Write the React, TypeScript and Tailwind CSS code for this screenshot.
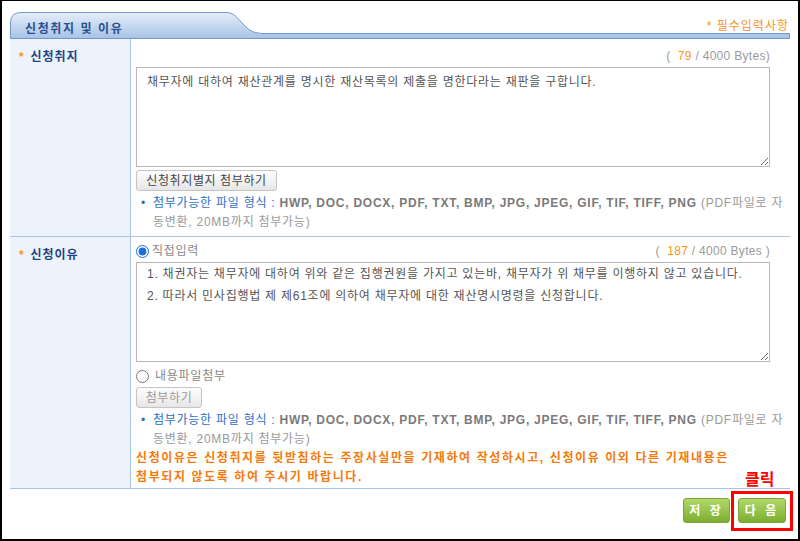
import React from "react";

const F = { fontFamily: '"Liberation Sans", "Noto Sans CJK KR", sans-serif' };

function FileNote() {
  return (
    <div className="flex gap-[7px] pl-[5px] text-[12px] leading-[19px]">
      <span className="text-[#2d6fc4]">•</span>
      <div className="break-all">
        <span className="text-[#2d6fc4]">첨부가능한 파일 형식 : </span>
        <span className="font-bold text-[#7a7a7a]">HWP, DOC, DOCX, PDF, TXT, BMP, JPG, JPEG, GIF, TIF, TIFF, PNG</span>
        <span className="text-[#9a9a9a]"> (PDF파일로 자동변환, 20MB까지 첨부가능)</span>
      </div>
    </div>
  );
}

function GrayButton({ children, w }: { children: React.ReactNode; w: string }) {
  return (
    <button
      className={`${w} h-[21px] rounded-[3px] border border-[#c4c4c4] bg-gradient-to-b from-[#ffffff] to-[#e6e6e6] text-[12px] text-[#444] leading-none tracking-[0.6px]`}
      style={F}
    >
      {children}
    </button>
  );
}

function Label({ children }: { children: React.ReactNode }) {
  return (
    <div className="flex items-center gap-[6px] pl-[9px] pt-[9px] text-[12px] font-bold text-[#1e4386]">
      <span className="text-[#f7941d]">*</span>
      <span className="tracking-[1px]">{children}</span>
    </div>
  );
}

function Bytes({ n, space }: { n: number; space?: boolean }) {
  return (
    <div className="text-[12px] text-[#9a9a9a] tracking-[0.3px]">
      (&nbsp;&nbsp;<span className="text-[#f7941d]">{n}</span> / 4000 Bytes{space ? " " : ""})
    </div>
  );
}

export default function App() {
  const ta =
    "w-[634px] h-[100px] border border-[#b8b8b8] bg-white pl-[10px] pr-[2px] text-[12px] leading-[22px] text-[#555] resize-y outline-none block overflow-hidden";
  return (
    <div
      className="w-[800px] h-[541px] border-t-[1px] border-l-[2px] border-r-[2px] border-b-[2px] border-black bg-white relative overflow-hidden tracking-[0.75px]"
      style={F}
    >
      <div className="pt-[11px] pl-[8px] pr-[8px]">
        {/* header */}
        <div className="grid h-[27px]">
          <svg className="[grid-area:1/1] self-end" width="782" height="27" viewBox="0 0 782 27">
            <defs>
              <linearGradient id="tg" x1="0" y1="0" x2="0" y2="1">
                <stop offset="0" stopColor="#e6eef9" />
                <stop offset="1" stopColor="#a7c2e6" />
              </linearGradient>
            </defs>
            <path
              d="M0.5 26.5 L0.5 11 Q0.5 0.5 11 0.5 L216 0.5 C231 0.5 232 21.5 252 21.5 L779.5 21.5 L779.5 26.5 Z"
              fill="url(#tg)"
              stroke="#7198cb"
              strokeWidth="1"
            />
          </svg>
          <div className="[grid-area:1/1] flex justify-between pl-[15px] pr-[3px]">
            <span className="pt-[8px] text-[12px] font-bold text-[#284f8f] tracking-[1.6px]">신청취지 및 이유</span>
            <span className="pt-[5px] text-[12px] text-[#f7941d] tracking-[1px]">* 필수입력사항</span>
          </div>
        </div>

        {/* table */}
        <div className="w-[780px]">
          {/* row 1 */}
          <div className="flex h-[198px] border-b border-[#a9c4ea]">
            <div className="w-[121px] bg-[#eef3fb] border-r border-[#a9c4ea]">
              <Label>신청취지</Label>
            </div>
            <div className="flex-1 pl-[5px] pt-[8px]">
              <div className="flex justify-end w-[634px] h-[18px] items-center">
                <Bytes n={79} />
              </div>
              <textarea
                readOnly
                className={`${ta} mt-[2px] pt-[3px]`}
                style={F}
                defaultValue="채무자에 대하여 재산관계를 명시한 재산목록의 제출을 명한다라는 재판을 구합니다."
              />
              <div className="mt-[3px] flex">
                <GrayButton w="w-[141px]">신청취지별지 첨부하기</GrayButton>
              </div>
              <div className="mt-[3px] w-[652px]">
                <FileNote />
              </div>
            </div>
          </div>

          {/* row 2 */}
          <div className="flex h-[252px] border-b border-[#a9c4ea]">
            <div className="w-[121px] bg-[#eef3fb] border-r border-[#a9c4ea]">
              <Label>신청이유</Label>
            </div>
            <div className="flex-1 pl-[5px] pt-[6px]">
              <div className="flex justify-between items-center w-[634px] h-[16px]">
                <label className="flex items-center gap-[3px] text-[12px] text-[#888]">
                  <input type="radio" name="r" defaultChecked className="m-0 w-[13px] h-[13px] accent-[#1a6fe0]" />
                  직접입력
                </label>
                <Bytes n={187} space />
              </div>
              <textarea
                readOnly
                wrap="off"
                className={`${ta} mt-[3px] pt-[0px]`}
                style={F}
                defaultValue={
                  "1. 채권자는 채무자에 대하여 위와 같은 집행권원을 가지고 있는바, 채무자가 위 채무를 이행하지 않고 있습니다.\n2. 따라서 민사집행법 제 제61조에 의하여 채무자에 대한 재산명시명령을 신청합니다."
                }
              />
              <label className="mt-[6px] flex items-center gap-[6px] text-[12px] text-[#888] h-[16px]">
                <input type="radio" name="r" className="m-0 w-[13px] h-[13px] accent-[#1a6fe0]" />
                내용파일첨부
              </label>
              <div className="mt-[3px] flex">
                <GrayButton w="w-[66px]">
                  <span className="text-[#999]">첨부하기</span>
                </GrayButton>
              </div>
              <div className="mt-[3px] w-[652px]">
                <FileNote />
              </div>
              <div className="text-[12px] leading-[19px] font-bold text-[#f47a0c] tracking-[1.6px]">
                신청이유은 신청취지를 뒷받침하는 주장사실만을 기재하여 작성하시고, 신청이유 이외 다른 기재내용은
                <br />
                첨부되지 않도록 하여 주시기 바랍니다.
              </div>
            </div>
          </div>

          {/* buttons */}
          <div className="flex justify-end gap-[8px] pt-[9px] pr-[4px]">
            <button className="w-[47px] h-[25px] rounded-[3px] border border-[#7aa83a] bg-gradient-to-b from-[#b2d86a] to-[#7cae2e] text-[12px] font-bold text-white tracking-[3px]" style={F}>
              저 장
            </button>
            <button className="w-[48px] h-[25px] rounded-[3px] border border-[#7aa83a] bg-gradient-to-b from-[#b2d86a] to-[#7cae2e] text-[12px] font-bold text-white tracking-[3px]" style={F}>
              다 음
            </button>
          </div>
        </div>
      </div>

      {/* annotation overlay */}
      <div className="absolute left-[743px] top-[467px] text-[16px] font-bold text-[#ff0000] tracking-normal" style={F}>
        클릭
      </div>
      <div className="absolute left-[729px] top-[490px] w-[62px] h-[40px] border-[3px] border-[#ff0000]" />
    </div>
  );
}
